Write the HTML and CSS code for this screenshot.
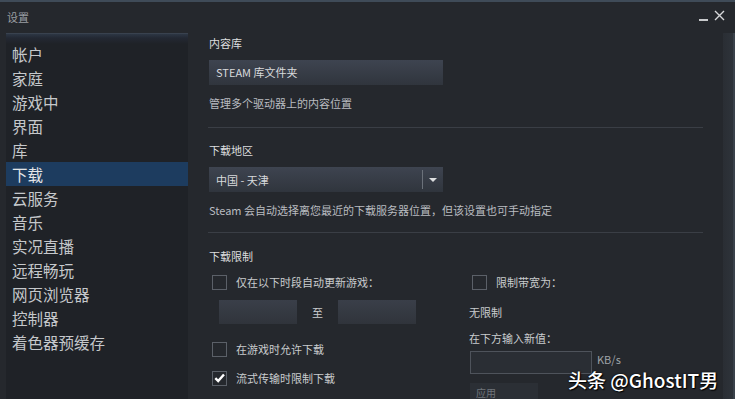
FILE: index.html
```html
<!DOCTYPE html>
<html lang="zh-CN">
<head>
  <meta charset="utf-8" />
  <title>设置</title>
  <link rel="stylesheet" href="styles.css">
</head>
<body>
  <div class="window">
    <!-- 标题栏 -->
    <div class="titlebar">
      <span class="title">设置</span>
      <span class="controls">
        <span class="min"></span>
        <svg class="close" width="11" height="11" viewBox="0 0 11 11"><path d="M1 1 L10 10 M10 1 L1 10" stroke="#d6d8da" stroke-width="1.4"/></svg>
      </span>
    </div>

    <div class="main">
      <!-- 左侧菜单 -->
      <ul class="sidebar">
        <li>帐户</li>
        <li>家庭</li>
        <li>游戏中</li>
        <li>界面</li>
        <li>库</li>
        <li class="active">下载</li>
        <li>云服务</li>
        <li>音乐</li>
        <li>实况直播</li>
        <li>远程畅玩</li>
        <li>网页浏览器</li>
        <li>控制器</li>
        <li>着色器预缓存</li>
      </ul>

      <!-- 设置内容 -->
      <div class="content">
        <div class="label">内容库</div>
        <div class="btn wide">STEAM 库文件夹</div>
        <div class="desc">管理多个驱动器上的内容位置</div>
        <div class="divider"></div>

        <div class="label">下载地区</div>
        <div class="select">
          <span class="select-text">中国 - 天津</span>
          <span class="select-sep"></span>
          <span class="select-arrow"></span>
        </div>
        <div class="desc">Steam 会自动选择离您最近的下载服务器位置，但该设置也可手动指定</div>
        <div class="divider second"></div>

        <div class="label">下载限制</div>
        <div class="limits">
          <div class="col-left">
            <div class="check-row"><span class="box"></span>仅在以下时段自动更新游戏：</div>
            <div class="time-row">
              <span class="time"></span>
              <span class="to">至</span>
              <span class="time"></span>
            </div>
            <div class="check-row row2"><span class="box"></span>在游戏时允许下载</div>
            <div class="check-row row3">
              <span class="box">
                <svg width="14" height="14" viewBox="0 0 14 14"><path d="M2.5 7.2 L5.6 10.3 L11.8 3.2" fill="none" stroke="#ffffff" stroke-width="2.6"/></svg>
              </span>流式传输时限制下载
            </div>
          </div>
          <div class="col-right">
            <div class="check-row"><span class="box"></span>限制带宽为：</div>
            <div class="plain nolimit">无限制</div>
            <div class="plain">在下方输入新值：</div>
            <div class="kb-row"><span class="kb-input"></span><span class="kb">KB/s</span></div>
            <div class="apply">应用</div>
          </div>
        </div>
      </div>
      <div class="edge"></div>
    </div>

    <div class="watermark">头条 @GhostIT男</div>
  </div>
</body>
</html>
```

FILE: styles.css
```css
* {
  box-sizing: border-box;
}
html, body {
  margin: 0;
  padding: 0;
}
body {
  width: 735px;
  height: 399px;
  overflow: hidden;
  background: #25282d;
  font-family: "Noto Sans CJK SC", "Liberation Sans", sans-serif;
  color: #dcdedf;
}
.window {
  position: relative;
  width: 735px;
  height: 399px;
  border-top: 2px solid #3f4b58;
  background: #25282d;
}
.titlebar {
  height: 31px;
  display: flex;
  align-items: center;
  justify-content: space-between;
  padding: 0 10px 0 7px;
}
.title {
  font-size: 11px;
  color: #9a9ea3;
  margin-top: -2px;
}
.controls {
  display: flex;
  align-items: center;
  gap: 6px;
  margin-top: -4px;
}
.min {
  width: 9px;
  height: 2px;
  background: #c8cacc;
  margin-top: 8px;
}
.main {
  display: flex;
  height: 366px;
}
.sidebar {
  list-style: none;
  margin: 0 0 0 6px;
  padding: 8px 0 0;
  width: 182px;
  background: linear-gradient(#2d3644 0, #232833 4px, #1f2227 10px, #1f2227 100%);
  border-top: 1px solid #39424f;
}
.sidebar li {
  height: 24px;
  line-height: 24px;
  padding-left: 6px;
  font-size: 15.5px;
  color: #c5c8cb;
}
.sidebar li.active {
  background: #1d3c5f;
  color: #e4e6e8;
}
.content {
  flex: 1;
  padding: 2px 0 0 21px;
  font-size: 11px;
}
.label {
  height: 16px;
  line-height: 16px;
  color: #dcdedf;
}
.btn {
  margin-top: 9px;
  height: 25px;
  line-height: 25px;
  width: 234px;
  padding-left: 7px;
  background: linear-gradient(#3e4450, #30353d);
  color: #d8dadc;
}
.desc {
  margin-top: 10px;
  height: 16px;
  line-height: 16px;
  color: #b9bcc0;
}
.divider {
  margin: 16px 0 14px -1px;
  height: 1px;
  width: 495px;
  background: #3a3e45;
}
.divider.second {
  margin-top: 14px;
  margin-bottom: 15px;
}
.select {
  margin-top: 9px;
  width: 234px;
  height: 25px;
  display: flex;
  align-items: center;
  background: linear-gradient(#3e4450, #30353d);
}
.select-text {
  flex: 1;
  padding-left: 7px;
  color: #d8dadc;
}
.select-sep {
  width: 1px;
  height: 19px;
  background: #6b717a;
}
.select-arrow {
  width: 0;
  height: 0;
  margin: 1px 6px 0 6px;
  border-left: 4px solid transparent;
  border-right: 4px solid transparent;
  border-top: 4px solid #dcdedf;
}
.limits {
  display: grid;
  grid-template-columns: 260px 1fr;
  margin-top: 10px;
}
.check-row {
  display: flex;
  align-items: center;
  height: 16px;
  padding-left: 3px;
  color: #c9ccce;
}
.box {
  width: 15px;
  height: 15px;
  border: 1px solid #5b6068;
  margin-right: 9px;
  display: flex;
  align-items: center;
  justify-content: center;
}
.time-row {
  display: flex;
  align-items: center;
  margin: 10px 0 0 10px;
}
.time {
  width: 78px;
  height: 24px;
  background: linear-gradient(#3a3f49, #30343b);
}
.to {
  width: 41px;
  text-align: center;
  color: #c9ccce;
}
.row2 {
  margin-top: 17px;
}
.row3 {
  margin-top: 13px;
}
.plain {
  height: 16px;
  line-height: 16px;
  color: #c9ccce;
  margin-top: 10px;
}
.plain.nolimit {
  margin-top: 14px;
}
.kb-row {
  display: flex;
  align-items: flex-start;
  margin-top: 5px;
  margin-left: 1px;
}
.kb-input {
  width: 122px;
  height: 23px;
  border: 1px solid #4e535b;
  background: #2a2e34;
}
.kb {
  margin-left: 5px;
  margin-top: 1px;
  line-height: 14px;
  color: #9fa3a8;
}
.apply {
  margin-top: 9px;
  margin-left: 1px;
  width: 68px;
  height: 20px;
  line-height: 20px;
  padding-left: 6px;
  font-size: 10px;
  color: #6f747a;
  background: #2b2f35;
}
.edge {
  width: 12px;
  background: linear-gradient(90deg, #2a2e34, #2e333a);
  border-right: 2px solid #3a414a;
}
.watermark {
  position: absolute;
  left: 568px;
  top: 364px;
  font-size: 19px;
  font-weight: 500;
  color: #ffffff;
  text-shadow: 1px 1px 1px #000, 0 0 2px #000;
}
```
